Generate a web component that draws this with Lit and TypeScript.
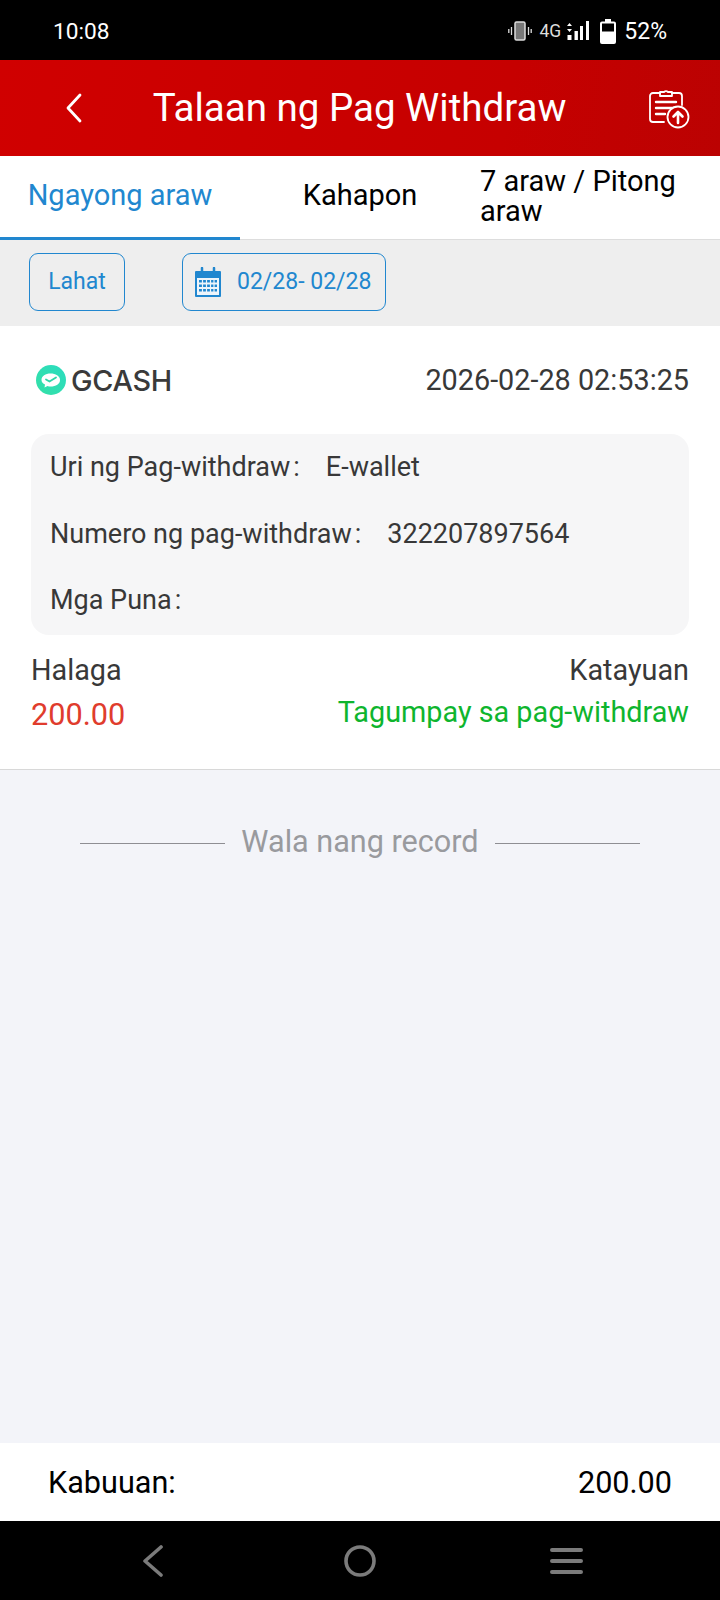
import { LitElement, html, css, svg } from 'lit';
import { customElement, state } from 'lit/decorators.js';

const backIcon = svg`<path d="M20 8 L8 21 L20 34" fill="none" stroke="#fff" stroke-width="2.8" stroke-linecap="round" stroke-linejoin="round"/>`;

@customElement('app-root')
export class AppRoot extends LitElement {
  static styles = css`
    :host {
      display: flex;
      flex-direction: column;
      width: 720px;
      height: 1600px;
      background: #f3f4f9;
      font-family: Roboto, 'Liberation Sans', sans-serif;
      color: #383838;
      overflow: hidden;
    }
    .status {
      height: 60px;
      background: #000;
      color: #fff;
      display: flex;
      align-items: center;
      padding: 2px 53px 0 53px;
      box-sizing: border-box;
      font-size: 22.7px;
    }
    .status .time { flex: 1; }
    .status .icons { display: flex; align-items: center; }
    .status .net { font-size: 17.5px; margin: 0 5px 0 8px; color: #ddd; }
    .status .pct { font-size: 23px; margin-left: 8px; }
    .header {
      height: 96px;
      background: linear-gradient(100deg, #d00000, #c60000 70%, #bb0202);
      color: #fff;
      display: flex;
      align-items: center;
      box-sizing: border-box;
      padding: 0 28px 0 60px;
    }
    .header .title {
      flex: 1;
      text-align: center;
      font-size: 38.5px;
      padding-right: 17px;
      padding-bottom: 2px;
    }
    .tabs {
      height: 84px;
      background: #fff;
      display: flex;
      box-sizing: border-box;
      border-bottom: 1px solid #ddd;
    }
    .tab {
      width: 240px;
      box-sizing: border-box;
      font-size: 29px;
      color: #000;
      display: flex;
      align-items: center;
      justify-content: center;
      line-height: 30px;
      border-bottom: 3px solid transparent;
      margin-bottom: -1px;
      padding-bottom: 3px;
    }
    .tab.active { color: #2187cf; border-bottom-color: #2187cf; }
    .tab.wrap { justify-content: flex-start; padding-bottom: 1px; }
    .filters {
      height: 86px;
      background: #eeeeee;
      display: flex;
      align-items: center;
      gap: 57px;
      padding: 0 29px 2px;
      box-sizing: border-box;
    }
    .chip {
      height: 58px;
      border: 1px solid #2187cf;
      border-radius: 9px;
      color: #2187cf;
      font-size: 23px;
      display: flex;
      align-items: center;
      box-sizing: border-box;
      padding-bottom: 1px;
    }
    .chip.all { width: 96px; justify-content: center; }
    .chip.date { width: 204px; padding-left: 12px; gap: 16px; }
    .card {
      background: #fff;
      padding: 0 31px;
      height: 444px;
      box-sizing: border-box;
      border-bottom: 1px solid #d8d8d8;
    }
    .card-head {
      height: 108px;
      display: flex;
      align-items: center;
      justify-content: space-between;
    }
    .brand { display: flex; align-items: center; gap: 5px; padding-left: 5px; }
    .brand span {
      font-family: Inter, 'Liberation Sans', sans-serif;
      font-weight: 500;
      font-size: 28.8px;
      color: #3a3a3a;
      letter-spacing: -0.3px;
    }
    .stamp { font-size: 28.8px; }
    .info {
      background: #f6f6f7;
      border-radius: 18px;
      height: 201px;
      padding: 0 19px;
      box-sizing: border-box;
      font-size: 27px;
    }
    .row { display: flex; align-items: center; height: 66.5px; }
    .row .colon { margin: 0 26px 0 3px; }
    .sums {
      display: flex;
      justify-content: space-between;
      font-size: 28.8px;
      padding-top: 16px;
    }
    .sums .end { text-align: right; }
    .sums .line { height: 43px; line-height: 38px; }
    .sums .red { color: #e03c2d; font-size: 30.7px; line-height: 42px; }
    .sums .green { color: #0eb52e; line-height: 36px; }
    .body { flex: 1; }
    .none {
      display: flex;
      align-items: center;
      justify-content: center;
      gap: 16px;
      font-size: 30.6px;
      color: #999a9e;
      padding-top: 54px;
    }
    .none i { display: block; width: 145px; height: 1px; background: #8e8e93; margin-top: 4px; }
    .total {
      height: 78px;
      background: #fff;
      display: flex;
      align-items: center;
      justify-content: space-between;
      font-size: 30.6px;
      color: #000;
      padding: 0 48px;
      box-sizing: border-box;
    }
    .nav {
      height: 79px;
      background: #000;
      display: flex;
      align-items: center;
      gap: 174px;
      padding: 0 0 0 141px;
      box-sizing: border-box;
    }
    svg { display: block; flex: none; }
  `;

  @state() tabs = ['Ngayong araw', 'Kahapon', '7 araw / Pitong araw'];

  render() {
    return html`
      <div class="status">
        <span class="time">10:08</span>
        <div class="icons">
          <svg width="24" height="20" viewBox="0 0 24 20">
            <rect x="7" y="1" width="10" height="18" rx="1.5" fill="#777" stroke="#ddd" stroke-width="1.5"/>
            <path d="M3.5 6v8M.8 8v4M20.5 6v8M23.2 8v4" stroke="#ddd" stroke-width="1.3"/>
          </svg>
          <span class="net">4G</span>
          <svg width="24" height="22" viewBox="0 0 24 22">
            <path d="M3.5 3l2.500 3H1zM3.500 12L1 9h5z" fill="#fff"/>
            <rect x="1.500" y="15" width="4" height="5" fill="#fff"/>
            <rect x="8.500" y="11" width="3.400" height="9" fill="#fff"/>
            <rect x="14" y="6" width="3" height="14" fill="#fff"/>
            <rect x="20" y="1" width="3" height="19" fill="#fff"/>
          </svg>
          <svg style="margin-left:10px" width="16" height="25" viewBox="0 0 16 25">
            <path d="M5 0h6v2.500h3a2 2 0 0 1 2 2V23a2 2 0 0 1-2 2H2a2 2 0 0 1-2-2V4.500a2 2 0 0 1 2-2h3z" fill="#fff"/>
            <rect x="2" y="4.500" width="12" height="8" fill="#000"/>
          </svg>
          <span class="pct">52%</span>
        </div>
      </div>

      <div class="header">
        <svg width="28" height="42" viewBox="0 0 28 42">${backIcon}</svg>
        <div class="title">Talaan ng Pag Withdraw</div>
        <svg width="44" height="44" viewBox="0 0 44 44" fill="none" stroke="#fff" stroke-width="1.8" stroke-linecap="round" stroke-linejoin="round">
          <path d="M12 7H5a3 3 0 0 0-3 3v23a3 3 0 0 0 3 3h11M24 7h7a3 3 0 0 1 3 3v9"/>
          <path d="M12 10V6h4a3 3 0 0 1 4 0h4v4z"/>
          <path d="M8 16h20M8 22h18M8 28h9" stroke-width="2.400"/>
          <circle cx="30" cy="31" r="10.500" fill="#c40000"/>
          <path d="M30 37V26M25.500 30.500l4.500-4.500 4.500 4.500" stroke-width="2.600"/>
        </svg>
      </div>

      <div class="tabs">
        <div class="tab active">${this.tabs[0]}</div>
        <div class="tab">${this.tabs[1]}</div>
        <div class="tab wrap">${this.tabs[2]}</div>
      </div>

      <div class="filters">
        <div class="chip all">Lahat</div>
        <div class="chip date">
          <svg width="26" height="30" viewBox="0 0 26 30">
            <path d="M1 4h24a1 1 0 0 1 1 1v24a1 1 0 0 1-1 1H1a1 1 0 0 1-1-1V5a1 1 0 0 1 1-1z" fill="#2187cf"/>
            <rect x="2" y="11" width="22" height="17" fill="#eef5fb"/>
            <path d="M7 1v6M19 1v6" stroke="#2187cf" stroke-width="2.500" stroke-linecap="round"/>
            <path d="M4 13h18v2.500H4zM4 17.500h18V20H4zM4 22h18v2.500H4z" fill="#2187cf"/>
            <path d="M7.500 12v14M11.500 12v14M15.500 12v14M19 12v14" stroke="#eef5fb" stroke-width="1.200"/>
          </svg>
          <span>02/28- 02/28</span>
        </div>
      </div>

      <div class="card">
        <div class="card-head">
          <div class="brand">
            <svg width="30" height="30" viewBox="0 0 30 30">
              <defs>
                <linearGradient id="g" x1="0" y1="1" x2="1" y2="0">
                  <stop offset="0" stop-color="#34e0a6"/>
                  <stop offset="1" stop-color="#2bdcc0"/>
                </linearGradient>
              </defs>
              <circle cx="15" cy="15" r="15" fill="url(#g)"/>
              <path d="M5.500 15c0-4 4-6.500 9-6.500s9.500 2.500 9.500 6.500-4 6.500-9.500 6.500c-1 0-2 0-3-.5l-3 1.500.5-3C7 19 5.500 17 5.500 15z" fill="#fff"/>
              <path d="M10 14.500l3.500 2 6.500-4" fill="none" stroke="#2fd6a8" stroke-width="1.800" stroke-linecap="round"/>
            </svg>
            <span>GCASH</span>
          </div>
          <div class="stamp">2026-02-28 02:53:25</div>
        </div>
        <div class="info">
          <div class="row"><span>Uri ng Pag-withdraw</span><span class="colon">:</span><span>E-wallet</span></div>
          <div class="row"><span>Numero ng pag-withdraw</span><span class="colon">:</span><span>322207897564</span></div>
          <div class="row"><span>Mga Puna</span><span class="colon">:</span></div>
        </div>
        <div class="sums">
          <div>
            <div class="line">Halaga</div>
            <div class="line red">200.00</div>
          </div>
          <div class="end">
            <div class="line">Katayuan</div>
            <div class="line green">Tagumpay sa pag-withdraw</div>
          </div>
        </div>
      </div>

      <div class="body">
        <div class="none"><i></i><span>Wala nang record</span><i></i></div>
      </div>

      <div class="total"><span>Kabuuan:</span><span>200.00</span></div>

      <div class="nav">
        <svg width="29" height="32" viewBox="0 0 29 32"><path d="M20 2L4 16l16 14" fill="none" stroke="#7b7b7b" stroke-width="3.600" stroke-linecap="round" stroke-linejoin="round"/></svg>
        <svg width="32" height="32" viewBox="0 0 32 32"><circle cx="16" cy="16" r="14" fill="none" stroke="#7b7b7b" stroke-width="3.600"/></svg>
        <svg width="33" height="28" viewBox="0 0 33 28"><path d="M2 3h29M2 14h29M2 25h29" stroke="#7b7b7b" stroke-width="4" stroke-linecap="round"/></svg>
      </div>
    `;
  }
}
